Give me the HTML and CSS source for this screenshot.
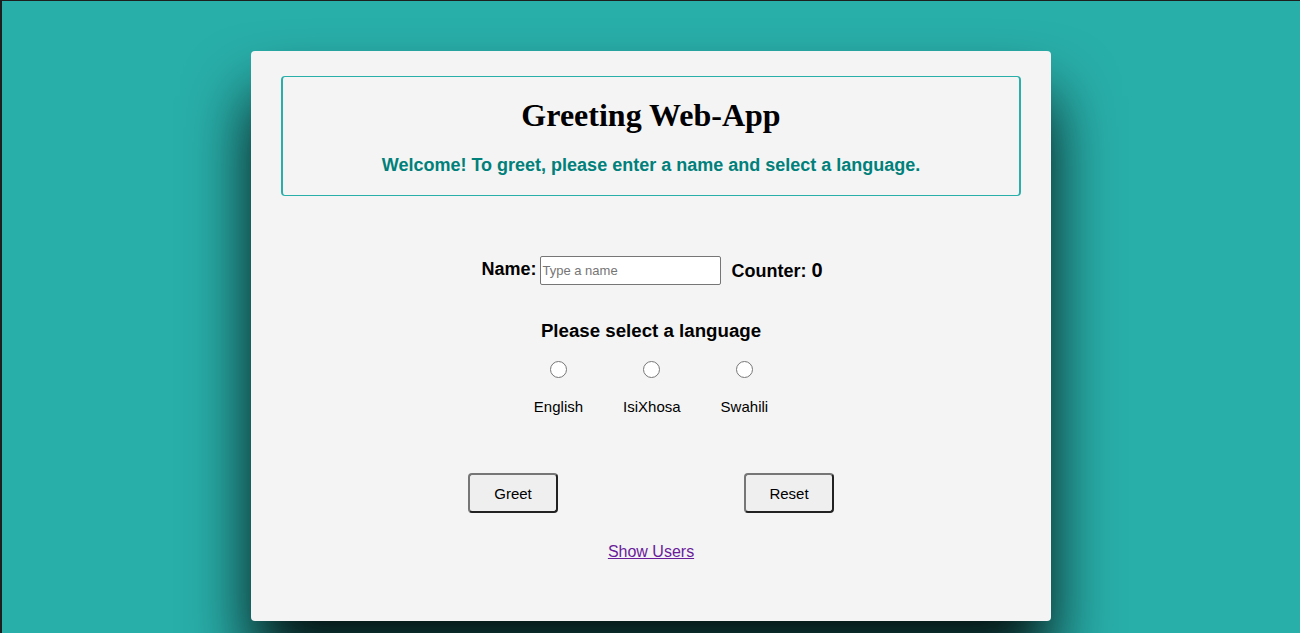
FILE: index.html
```html
<!DOCTYPE html>
<html lang="en">
<head>
<meta charset="utf-8">
<title>Greeting Web-App</title>
<link rel="stylesheet" href="styles.css">
</head>
<body>
<main class="card">
  <header class="banner">
    <h1 class="title">Greeting Web-App</h1>
    <p class="welcome">Welcome! To greet, please enter a name and select a language.</p>
  </header>
  <section class="name-row">
    <label class="name-label" for="name">Name:</label>
    <input class="name-input" id="name" type="text" placeholder="Type a name">
    <span class="counter">Counter: <span class="count">0</span></span>
  </section>
  <section class="languages">
    <h2 class="lang-title">Please select a language</h2>
    <div class="lang-options">
      <label class="lang"><input type="radio" name="lang" class="radio"><span>English</span></label>
      <label class="lang"><input type="radio" name="lang" class="radio"><span>IsiXhosa</span></label>
      <label class="lang"><input type="radio" name="lang" class="radio"><span>Swahili</span></label>
    </div>
  </section>
  <div class="actions">
    <button class="btn">Greet</button>
    <button class="btn">Reset</button>
  </div>
  <a class="users-link" href="#">Show Users</a>
</main>
</body>
</html>
```
FILE: styles.css
```css
html {
  background: #29afaa;
}
body {
  box-sizing: border-box;
  margin: 0;
  min-height: 633px;
  border-top: 1px solid #1d1f1f;
  border-left: 2px solid #1d1f1f;
  padding-top: 50px;
  font-family: "Liberation Sans", Arial, sans-serif;
}
.card {
  box-sizing: border-box;
  width: 800px;
  height: 570px;
  margin: 0 auto;
  background: #f4f4f4;
  border-radius: 4px;
  padding: 25px 30px;
  box-shadow: 0 45px 65px rgba(0, 0, 0, 0.9);
  display: flex;
  flex-direction: column;
  align-items: center;
}
.banner {
  box-sizing: border-box;
  width: 740px;
  height: 120px;
  border: 1px solid #29afaa;
  border-left-width: 2px;
  border-right-width: 2px;
  border-radius: 4px;
  text-align: center;
  padding-top: 20px;
}
.title {
  margin: 0;
  font-family: "Liberation Serif", "Times New Roman", serif;
  font-size: 32px;
  line-height: 36px;
  font-weight: bold;
  color: #000;
}
.welcome {
  margin: 21px 0 0;
  font-size: 18px;
  line-height: 22px;
  font-weight: bold;
  color: #00807a;
}
.name-row {
  margin-top: 60px;
  margin-left: 2px;
  display: flex;
  align-items: center;
  gap: 4px;
}
.name-label {
  font-size: 18px;
  font-weight: bold;
  margin-top: -2px;
}
.name-input {
  box-sizing: border-box;
  width: 181px;
  height: 29px;
  border: 1px solid #767676;
  border-radius: 2px;
  background: #fff;
  padding: 0 1px;
  font-family: "Liberation Sans", Arial, sans-serif;
  font-size: 13px;
}
.name-input::placeholder {
  color: #757575;
}
.counter {
  margin-left: 6px;
  font-size: 18px;
  font-weight: bold;
}
.count {
  font-size: 20px;
}
.languages {
  margin-top: 34px;
  display: flex;
  flex-direction: column;
  align-items: center;
}
.lang-title {
  margin: 0;
  font-size: 18.7px;
  line-height: 24px;
  font-weight: bold;
}
.lang-options {
  margin-top: 18px;
  display: flex;
  gap: 40px;
}
.lang {
  display: flex;
  flex-direction: column;
  align-items: center;
  gap: 20px;
  font-size: 15px;
}
.radio {
  margin: 0;
  width: 17px;
  height: 17px;
}
.actions {
  margin-top: 58px;
  display: flex;
  gap: 186px;
}
.btn {
  box-sizing: border-box;
  width: 90px;
  height: 40px;
  background: #efefef;
  border: 2px solid;
  border-color: #767676 #222 #222 #767676;
  border-radius: 4px;
  font-family: "Liberation Sans", Arial, sans-serif;
  font-size: 15px;
  color: #000;
}
.users-link {
  margin-top: 30px;
  font-size: 16px;
  color: #6a1b9a;
  text-decoration: underline;
}
```
